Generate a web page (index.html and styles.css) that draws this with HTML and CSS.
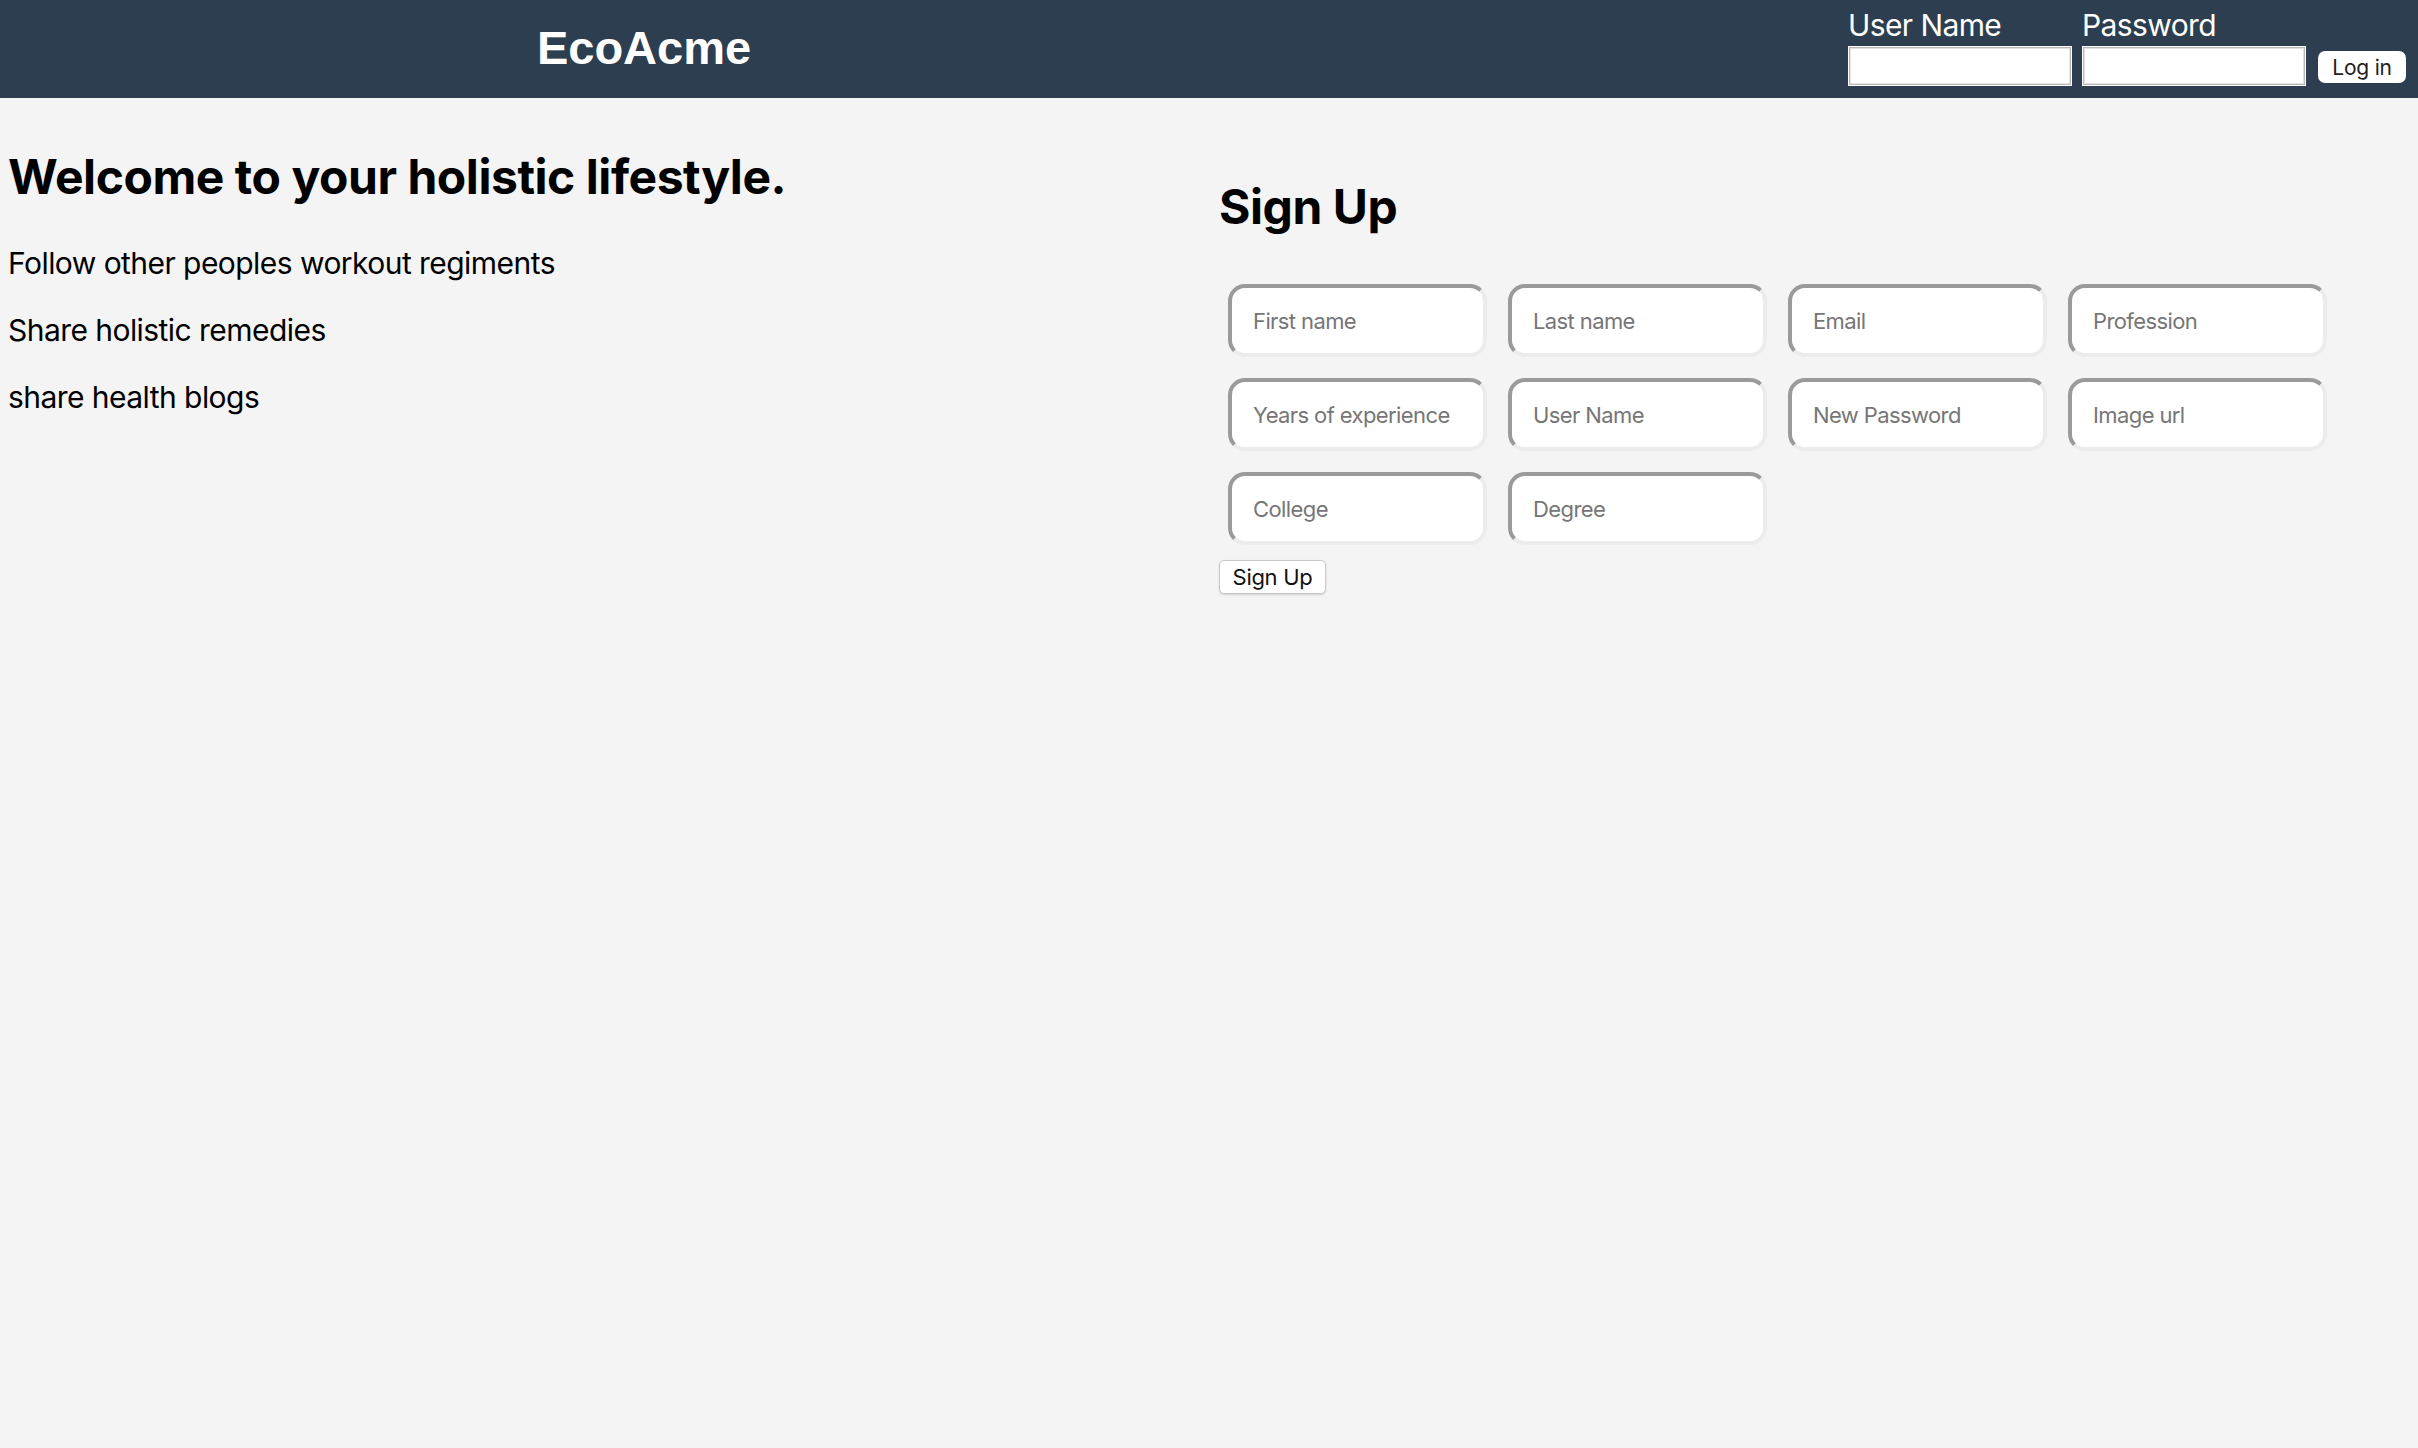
FILE: index.html
```html
<!DOCTYPE html>
<html lang="en">
<head>
<meta charset="utf-8">
<title>EcoAcme</title>
<link rel="stylesheet" href="styles.css">
</head>
<body>
<header class="topbar">
  <div class="brand">EcoAcme</div>
  <form class="login">
    <label class="login-field">
      <span class="login-label">User Name</span>
      <input class="login-input" type="text">
    </label>
    <label class="login-field">
      <span class="login-label">Password</span>
      <input class="login-input" type="password">
    </label>
    <button class="login-btn" type="button">Log in</button>
  </form>
</header>
<main class="main">
  <section class="intro">
    <h1 class="intro-title">Welcome to your holistic lifestyle.</h1>
    <p class="intro-line intro-first">Follow other peoples workout regiments</p>
    <p class="intro-line">Share holistic remedies</p>
    <p class="intro-line">share health blogs</p>
  </section>
  <section class="signup">
    <h2 class="signup-title">Sign Up</h2>
    <form class="signup-form">
      <div class="signup-grid">
        <input class="field" type="text" placeholder="First name">
        <input class="field" type="text" placeholder="Last name">
        <input class="field" type="text" placeholder="Email">
        <input class="field" type="text" placeholder="Profession">
        <input class="field" type="text" placeholder="Years of experience">
        <input class="field" type="text" placeholder="User Name">
        <input class="field" type="password" placeholder="New Password">
        <input class="field" type="text" placeholder="Image url">
        <input class="field" type="text" placeholder="College">
        <input class="field" type="text" placeholder="Degree">
      </div>
      <button class="signup-btn" type="button">Sign Up</button>
    </form>
  </section>
</main>
</body>
</html>
```

FILE: styles.css
```css
* { box-sizing: border-box; }

html, body {
  margin: 0;
  padding: 0;
}

body {
  background: #f4f4f4;
  font-family: Inter, "Noto Sans", sans-serif;
  color: #000;
  min-height: 1448px;
}

.topbar {
  height: 98px;
  background: #2c3e4f;
  display: flex;
  align-items: flex-start;
}

.brand {
  width: 1288px;
  padding-top: 21px;
  text-align: center;
  font-family: "Liberation Sans", Arial, sans-serif;
  font-weight: 700;
  font-size: 47px;
  line-height: 54px;
  color: #fff;
}

.login {
  margin-left: auto;
  margin-right: 12px;
  padding-top: 7px;
  display: flex;
  align-items: flex-start;
}

.login-field {
  display: flex;
  flex-direction: column;
  margin-right: 10px;
}

.login-label {
  font-size: 30px;
  line-height: 36px;
  letter-spacing: -0.6px;
  color: #fff;
  font-weight: 400;
}

.login-input {
  margin: 3px 0 0 0;
  width: 224px;
  height: 40px;
  background: #fff;
  border: 2px solid #b8b8b8;
  box-shadow: inset 0 0 0 1px #e2e2e2;
  outline: 1px solid #fff;
  outline-offset: -1px;
}

.login-btn {
  margin: 44px 0 0 2px;
  width: 88px;
  height: 32px;
  padding: 0;
  background: #fff;
  border: none;
  border-radius: 7px;
  font-family: Inter, "Noto Sans", sans-serif;
  font-size: 21px;
  letter-spacing: -0.2px;
  color: #222;
}

.main {
  display: grid;
  grid-template-columns: 1209px 1209px;
}

.intro {
  padding-left: 8px;
}

.intro-title {
  margin: 50px 0 0 0;
  font-size: 48px;
  line-height: 58px;
  font-weight: 700;
  letter-spacing: -0.45px;
}

.intro-line {
  margin: 31px 0 0 0;
  font-size: 30px;
  line-height: 36px;
  letter-spacing: -0.55px;
}

.intro-first {
  margin-top: 39px;
}

.signup {
  padding-left: 10px;
}

.signup-title {
  margin: 80px 0 0 0;
  font-size: 48px;
  line-height: 58px;
  font-weight: 700;
  letter-spacing: -0.45px;
}

.signup-form {
  margin-top: 48px;
}

.signup-grid {
  margin-left: 9px;
  display: grid;
  grid-template-columns: repeat(4, 259px);
  column-gap: 21px;
  row-gap: 21px;
}

.field {
  width: 259px;
  height: 73px;
  margin: 0;
  padding: 0 0 0 21px;
  background: #fff;
  border-width: 4px;
  border-style: solid;
  border-color: #9a9a9a #ececec #ececec #9a9a9a;
  border-radius: 17px;
  font-family: Inter, "Noto Sans", sans-serif;
  font-size: 22px;
  letter-spacing: -0.6px;
  color: #222;
}

.field::placeholder {
  color: #767676;
}

.signup-btn {
  margin-top: 15px;
  width: 107px;
  height: 34px;
  padding: 0;
  background: #fff;
  border: 1px solid #c9c9c9;
  border-radius: 5px;
  box-shadow: 0 1px 2px rgba(0, 0, 0, 0.15);
  font-family: Inter, "Noto Sans", sans-serif;
  font-size: 22px;
  letter-spacing: -0.3px;
  color: #111;
}
```
